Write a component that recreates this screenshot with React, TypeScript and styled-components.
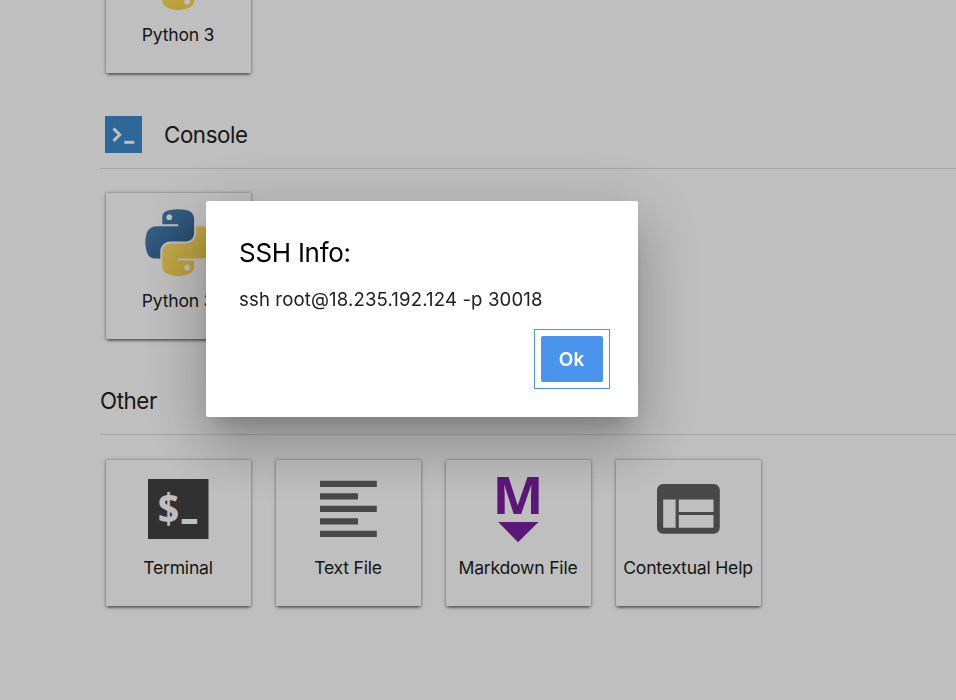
import React from 'react';
import styled, { createGlobalStyle } from 'styled-components';

const GlobalStyle = createGlobalStyle`
  *, *::before, *::after { box-sizing: border-box; }
  html, body { margin: 0; padding: 0; background: #fff; overflow: hidden; }
  body { font-family: Inter, Roboto, sans-serif; color: #212121; }
`;

const Launcher = styled.main`
  display: flex;
  flex-direction: column;
  height: 700px;
  padding-left: 100px;
  background: #fff;
  overflow: hidden;
`;

const Section = styled.section<{ $scrolled?: boolean }>`
  flex: none;
  margin-top: ${(p) => (p.$scrolled ? '-97px' : '0')};
`;

const SectionHead = styled.header`
  display: flex;
  align-items: center;
  gap: 22px;
  height: 96px;
  padding: 43px 0 15px;
  border-bottom: 1px solid #dcdcdc;
`;

const SectionIcon = styled.div`
  display: flex;
  width: 37px;
  height: 37px;
  margin-left: 5px;
`;

const SectionTitle = styled.h2`
  margin: 0;
  padding-top: 1px;
  font-size: 22.3px;
  font-weight: 400;
  line-height: 30px;
  letter-spacing: -0.4px;
`;

const Cards = styled.div<{ $top?: number }>`
  display: flex;
  gap: 25px;
  padding: ${(p) => p.$top ?? 24}px 0 0 6px;
`;

const Card = styled.button`
  display: flex;
  flex-direction: column;
  align-items: center;
  flex: none;
  width: 145px;
  height: 146px;
  padding: 16px 0 0;
  border: 0;
  border-radius: 1px;
  background: #fff;
  color: inherit;
  font-family: inherit;
  box-shadow:
    0 0 2px 0.5px rgba(0, 0, 0, 0.18),
    0 4px 2px -2px rgba(0, 0, 0, 0.26),
    0 2px 3px rgba(0, 0, 0, 0.16),
    0 1px 6px rgba(0, 0, 0, 0.1);
`;

const CardIcon = styled.div`
  display: flex;
  width: 67px;
  height: 67px;
`;

const CardLabel = styled.span`
  margin: 13px 1px 0 0;
  font-size: 17.6px;
  line-height: 24px;
  letter-spacing: -0.22px;
  white-space: nowrap;
`;

const Overlay = styled.div`
  position: fixed;
  inset: 0;
  display: flex;
  align-items: flex-start;
  padding: 201px 0 0 206px;
  background: rgba(0, 0, 0, 0.25);
`;

const Dialog = styled.div`
  display: flex;
  flex-direction: column;
  width: 431.5px;
  height: 215.5px;
  padding: 34px 28px 27px 33px;
  border-radius: 2px;
  background: #fff;
  box-shadow:
    0 16px 22px -10px rgba(0, 0, 0, 0.2),
    0 35px 55px 4px rgba(0, 0, 0, 0.14),
    0 13px 67px 12px rgba(0, 0, 0, 0.12);
`;

const DialogTitle = styled.h1`
  margin: 0;
  color: #000;
  font-size: 26px;
  font-weight: 400;
  line-height: 36px;
  letter-spacing: -0.28px;
`;

const DialogBody = styled.p`
  margin: 15px 0 0;
  font-size: 18.6px;
  line-height: 26px;
  letter-spacing: 0.13px;
  white-space: nowrap;
`;

const DialogFooter = styled.footer`
  display: flex;
  justify-content: flex-end;
  margin-top: 17px;
`;

const FocusFrame = styled.div`
  display: flex;
  padding: 6px;
  border: 1px solid #4a94ee;
`;

const OkButton = styled.button`
  width: 62px;
  height: 46px;
  padding: 1px 0 0;
  border: 0;
  border-radius: 2px;
  background: #4a94ee;
  color: #fff;
  font-family: inherit;
  font-size: 19px;
  font-weight: 600;
  outline: none;
`;

const Svg = styled.svg`
  display: block;
  width: 100%;
  height: 100%;
  overflow: visible;
`;

const PythonIcon = ({ id }: { id: string }) => (
  <Svg viewBox="-0.5 -0.5 113 113">
    <defs>
      <linearGradient id={`${id}-b`} x1="0" y1="0" x2="0.8" y2="0.85">
        <stop offset="0" stopColor="#4f89bd" />
        <stop offset="1" stopColor="#316492" />
      </linearGradient>
      <linearGradient id={`${id}-y`} x1="0.2" y1="0.1" x2="0.65" y2="0.75">
        <stop offset="0" stopColor="#ffe26a" />
        <stop offset="1" stopColor="#fbd54e" />
      </linearGradient>
    </defs>
    <path
      fill={`url(#${id}-b)`}
      d="M54.92 0C50.34.02 45.96.41 42.11 1.09 30.76 3.1 28.7 7.29 28.7 15.03v10.22h26.81v3.41H18.64c-7.8 0-14.62 4.68-16.75 13.59-2.46 10.21-2.57 16.58 0 27.25 1.9 7.94 6.46 13.6 14.25 13.6h9.22V70.84c0-8.85 7.65-16.65 16.75-16.65h26.78c7.45 0 13.4-6.14 13.4-13.63V15.03c0-7.27-6.13-12.72-13.4-13.94C64.28.33 59.5-.02 54.92 0zM40.42 8.22c2.77 0 5.03 2.3 5.03 5.12 0 2.82-2.26 5.1-5.03 5.1-2.78 0-5.03-2.28-5.03-5.1 0-2.82 2.25-5.12 5.03-5.12z"
    />
    <path
      fill={`url(#${id}-y)`}
      d="M85.64 28.66v11.9c0 9.23-7.83 17-16.75 17H42.11c-7.34 0-13.41 6.28-13.41 13.63v25.53c0 7.27 6.32 11.54 13.41 13.62 8.48 2.5 16.62 2.95 26.78 0 6.75-1.95 13.4-5.88 13.4-13.62V86.5H55.51v-3.41H95.7c7.79 0 10.7-5.43 13.41-13.59 2.8-8.4 2.68-16.47 0-27.25-1.93-7.76-5.6-13.59-13.41-13.59H85.64zM70.57 93.31c2.78 0 5.03 2.28 5.03 5.1 0 2.83-2.25 5.12-5.03 5.12-2.77 0-5.03-2.29-5.03-5.12 0-2.82 2.26-5.1 5.03-5.1z"
    />
  </Svg>
);

const ConsoleIcon = () => (
  <Svg viewBox="0 0 37 37">
    <rect width="37" height="37" fill="#3c8bcc" />
    <path d="M8.5 12.5l6.200 6.200-6.200 6.200" fill="none" stroke="#fff" strokeWidth="3" />
    <rect x="19.3" y="24.8" width="10" height="3" fill="#fff" />
  </Svg>
);

const DollarSign = styled.text`
  font-family: 'Noto Sans', sans-serif;
  font-size: 41px;
  font-weight: 700;
  fill: #fff;
`;

const TerminalIcon = () => (
  <Svg viewBox="0 0 67 67">
    <rect x="3" y="3" width="60.5" height="60" fill="#424242" />
    <DollarSign x="12.8" y="46.5" textLength="21.5" lengthAdjust="spacingAndGlyphs">
      $
    </DollarSign>
    <rect x="36.7" y="43" width="15.5" height="5" fill="#fff" />
  </Svg>
);

const TextFileIcon = () => (
  <Svg viewBox="0 0 67 67">
    <path
      fill="#616161"
      d="M5 4.800h56.800V11H5zM5 17.300h38v6.200H5zM5 29.800h56.800V36H5zM5 42.300h38v6.200H5zM5 54.800h56.800V61H5z"
    />
  </Svg>
);

const MarkdownLetter = styled.text`
  font-family: 'Noto Sans', sans-serif;
  font-size: 52.5px;
  font-weight: 700;
  fill: #7b1fa2;
`;

const MarkdownIcon = () => (
  <Svg viewBox="0 0 67 67">
    <MarkdownLetter x="7.600" y="37.5" textLength="51" lengthAdjust="spacingAndGlyphs">
      M
    </MarkdownLetter>
    <path d="M13.200 46h40.300L33 66.300z" fill="#7b1fa2" />
  </Svg>
);

const HelpIcon = () => (
  <Svg viewBox="0 0 67 67">
    <path
      fill="#616161"
      fillRule="evenodd"
      d="M8 8h50.800a6 6 0 0 1 6 6v37.800a6 6 0 0 1-6 6H8a6 6 0 0 1-6-6V14a6 6 0 0 1 6-6zM8.200 23.500v28.300h12.400V23.500zM23.800 23.500v12.600h34.700V23.500zM23.800 39v12.800h34.700V39z"
    />
  </Svg>
);

const LauncherCard = ({ icon, label }: { icon: React.ReactNode; label: string }) => (
  <Card>
    <CardIcon>{icon}</CardIcon>
    <CardLabel>{label}</CardLabel>
  </Card>
);

export default function App() {
  return (
    <>
      <GlobalStyle />
      <Launcher>
        <Section $scrolled>
          <Cards>
            <LauncherCard icon={<PythonIcon id="notebook" />} label="Python 3" />
          </Cards>
        </Section>
        <Section>
          <SectionHead>
            <SectionIcon>
              <ConsoleIcon />
            </SectionIcon>
            <SectionTitle>Console</SectionTitle>
          </SectionHead>
          <Cards>
            <LauncherCard icon={<PythonIcon id="console" />} label="Python 3" />
          </Cards>
        </Section>
        <Section>
          <SectionHead>
            <SectionTitle>Other</SectionTitle>
          </SectionHead>
          <Cards $top={25}>
            <LauncherCard icon={<TerminalIcon />} label="Terminal" />
            <LauncherCard icon={<TextFileIcon />} label="Text File" />
            <LauncherCard icon={<MarkdownIcon />} label="Markdown File" />
            <LauncherCard icon={<HelpIcon />} label="Contextual Help" />
          </Cards>
        </Section>
      </Launcher>
      <Overlay>
        <Dialog role="dialog">
          <DialogTitle>SSH Info:</DialogTitle>
          <DialogBody>ssh root@18.235.192.124 -p 30018</DialogBody>
          <DialogFooter>
            <FocusFrame>
              <OkButton>Ok</OkButton>
            </FocusFrame>
          </DialogFooter>
        </Dialog>
      </Overlay>
    </>
  );
}
